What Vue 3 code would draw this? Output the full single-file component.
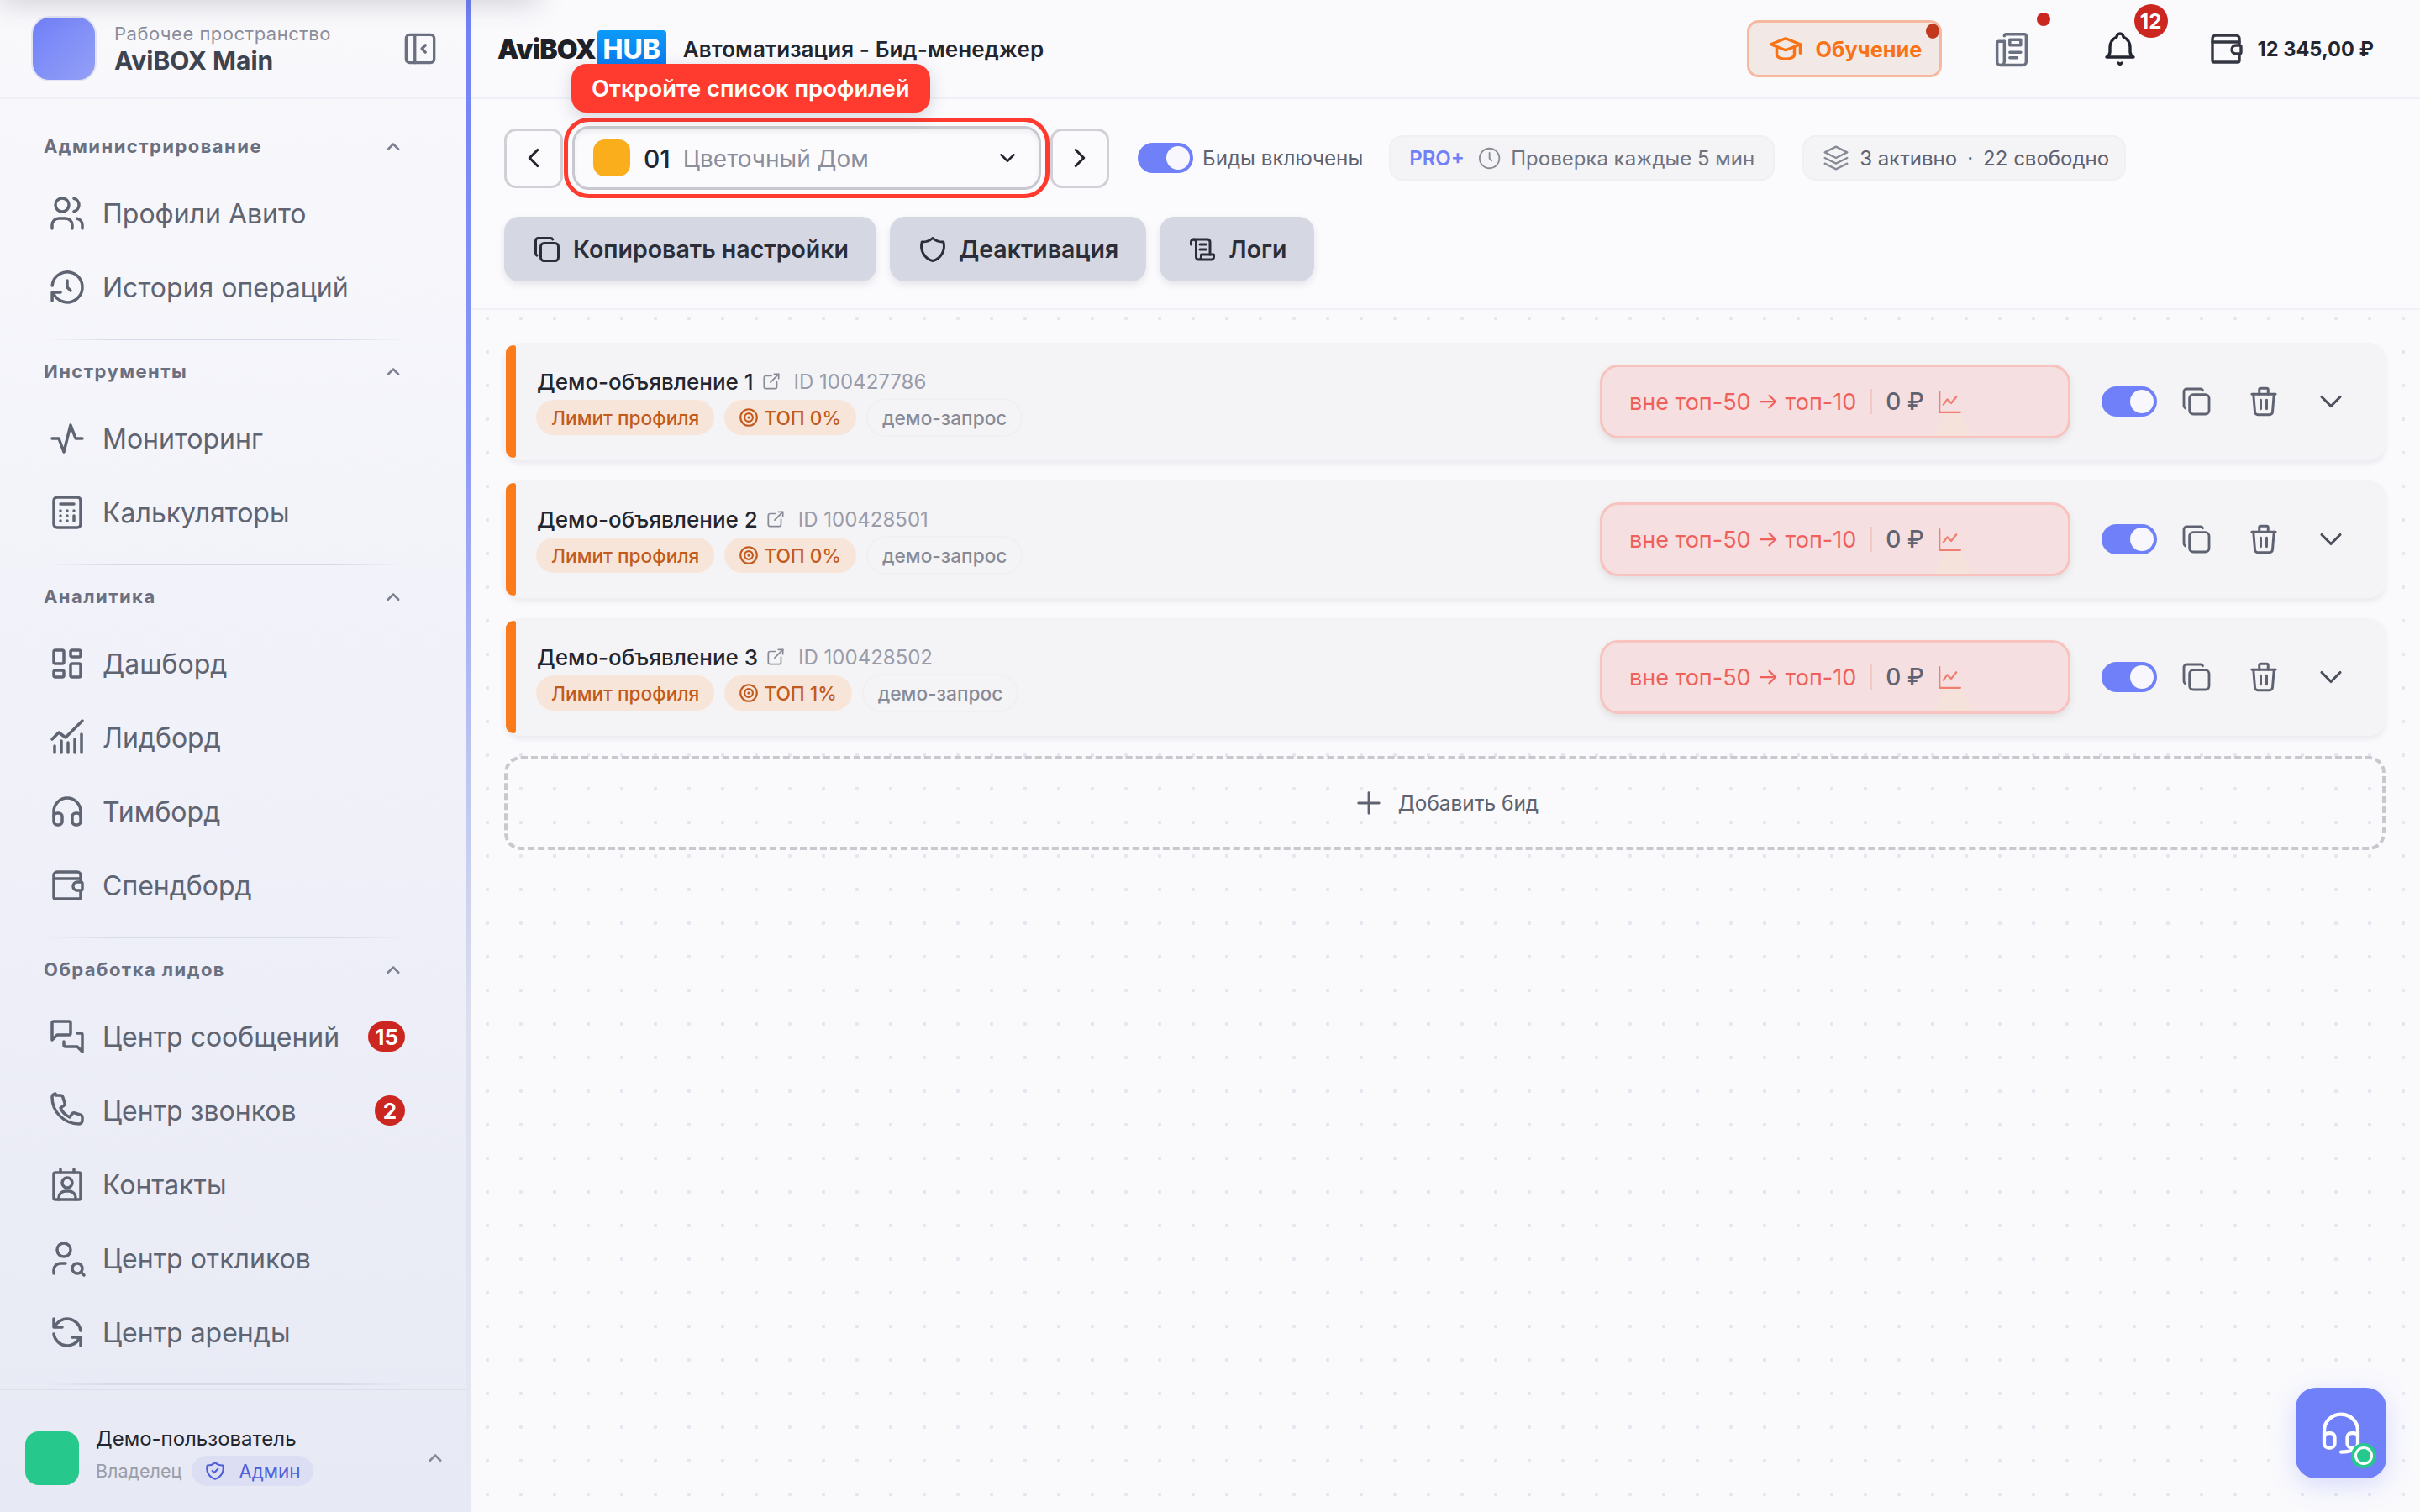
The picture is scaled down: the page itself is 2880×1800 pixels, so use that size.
<template>
  <div class="app">
    <aside class="sidebar">
      <div class="side-head">
        <div class="ws-logo"></div>
        <div class="ws-text">
          <div class="ws-label">Рабочее пространство</div>
          <div class="ws-name">AviBOX Main</div>
        </div>
        <Icon name="collapse" :size="50" :stroke="1.6" class="ws-collapse" />
      </div>

      <nav class="nav">
        <section v-for="sec in sections" :key="sec.title" class="nav-sec">
          <div class="nav-title">
            <span>{{ sec.title }}</span>
            <Icon name="chevUp" :size="30" />
          </div>
          <a v-for="item in sec.items" :key="item.label" class="nav-item">
            <Icon :name="item.icon" :size="48" :stroke="1.75" />
            <span class="nav-label">{{ item.label }}</span>
            <b v-if="item.badge" class="nav-badge">{{ item.badge }}</b>
          </a>
          <div class="nav-div"></div>
        </section>
      </nav>

      <div class="side-foot">
        <div class="avatar"></div>
        <div class="user">
          <div class="user-name">Демо-пользователь</div>
          <div class="user-role">
            <span>Владелец</span>
            <span class="role-pill"><Icon name="shieldCheck" :size="26" />Админ</span>
          </div>
        </div>
        <Icon name="chevUp" :size="30" class="foot-chev" />
      </div>
    </aside>

    <main class="main">
      <div class="top-shade"></div>
      <header class="header">
        <div class="brand">AviBOX<span class="hub">HUB</span></div>
        <div class="page-title">Автоматизация - Бид-менеджер</div>
        <button class="learn">
          <Icon name="school" :size="42" />
          <span>Обучение</span>
          <i class="learn-dot"></i>
        </button>
        <span class="head-ic news">
          <Icon name="news" :size="52" :stroke="1.6" />
          <i class="news-dot"></i>
        </span>
        <span class="head-ic bell">
          <Icon name="bell" :size="48" :stroke="1.7" />
          <b class="bell-badge">12</b>
        </span>
        <span class="head-ic wallet"><Icon name="wallet" :size="48" :stroke="1.7" /></span>
        <span class="balance">12 345,00 ₽</span>
      </header>

      <div class="toolbar">
        <div class="tool-row">
          <button class="arrow"><Icon name="chevLeft" :size="38" /></button>
          <div class="select-wrap">
            <div class="tip">Откройте список профилей</div>
            <div class="select">
              <span class="swatch"></span>
              <span class="sel-num">01</span>
              <span class="sel-name">Цветочный Дом</span>
              <Icon name="chevDown" :size="30" class="sel-chev" />
            </div>
          </div>
          <button class="arrow"><Icon name="chevRight" :size="38" /></button>
          <span class="toggle bids-toggle"><i></i></span>
          <span class="bids-label">Биды включены</span>
          <div class="info-pill pro-pill">
            <b>PRO+</b>
            <Icon name="clock" :size="35" :stroke="1.4" />
            <span>Проверка каждые 5 мин</span>
          </div>
          <div class="info-pill slots-pill">
            <Icon name="stack" :size="40" :stroke="1.4" />
            <span>3 активно</span><span class="sep">·</span><span>22 свободно</span>
          </div>
        </div>
        <div class="tool-row actions">
          <button class="act"><Icon name="copy" :size="36" />Копировать настройки</button>
          <button class="act"><Icon name="shield" :size="36" />Деактивация</button>
          <button class="act"><Icon name="script" :size="36" />Логи</button>
        </div>
      </div>

      <div class="content">
        <article v-for="bid in bids" :key="bid.id" class="card">
          <span class="card-bar"></span>
          <div class="card-info">
            <div class="card-title">
              <span class="card-name">{{ bid.name }}</span>
              <Icon name="external" :size="26" :stroke="1.6" class="card-ext" />
              <span class="card-id">ID {{ bid.id }}</span>
            </div>
            <div class="card-tags">
              <span class="tag warm">Лимит профиля</span>
              <span class="tag warm top-tag"><Icon name="target" :size="26" />{{ bid.top }}</span>
              <span class="tag plain">демо-запрос</span>
            </div>
          </div>
          <div class="pos-box">
            <span class="pos-text">вне топ-50 → топ-10</span>
            <span class="pos-sep"></span>
            <span class="pos-price">0 ₽</span>
            <Icon name="chart" :size="37" :stroke="1.5" class="pos-chart" />
            <i class="pos-beam"></i>
          </div>
          <span class="toggle card-toggle"><i></i></span>
          <Icon name="copy" :size="40" :stroke="1.7" class="card-copy" />
          <Icon name="trash" :size="42" :stroke="1.7" class="card-trash" />
          <Icon name="chevDown" :size="44" :stroke="1.7" class="card-chev" />
        </article>
        <button class="add-bid"><Icon name="plus" :size="42" :stroke="1.6" />Добавить бид</button>
      </div>

      <button class="fab">
        <Icon name="headset" :size="60" :stroke="1.7" />
        <i class="fab-dot"></i>
      </button>
    </main>
  </div>
</template>

<script setup>
import { h } from 'vue'

const paths = {
  users: ['M9 7m-4 0a4 4 0 1 0 8 0a4 4 0 1 0 -8 0', 'M3 21v-2a4 4 0 0 1 4 -4h4a4 4 0 0 1 4 4v2', 'M16 3.13a4 4 0 0 1 0 7.75', 'M21 21v-2a4 4 0 0 0 -3 -3.85'],
  history: ['M12 8v4l2 2', 'M3.05 11a9 9 0 1 1 .5 4m-.5 5v-5h5'],
  activity: ['M3 12h4l3 8l4 -16l3 8h4'],
  calc: ['M4 5a2 2 0 0 1 2 -2h12a2 2 0 0 1 2 2v14a2 2 0 0 1 -2 2h-12a2 2 0 0 1 -2 -2z', 'M8 7h8', 'M8 11h.01M12 11h.01M16 11h.01M8 14h.01M12 14h.01M8 17h.01M12 17h.01M16 14v3'],
  dashboard: ['M5 4h4a1 1 0 0 1 1 1v6a1 1 0 0 1 -1 1h-4a1 1 0 0 1 -1 -1v-6a1 1 0 0 1 1 -1', 'M5 16h4a1 1 0 0 1 1 1v2a1 1 0 0 1 -1 1h-4a1 1 0 0 1 -1 -1v-2a1 1 0 0 1 1 -1', 'M15 12h4a1 1 0 0 1 1 1v6a1 1 0 0 1 -1 1h-4a1 1 0 0 1 -1 -1v-6a1 1 0 0 1 1 -1', 'M15 4h4a1 1 0 0 1 1 1v2a1 1 0 0 1 -1 1h-4a1 1 0 0 1 -1 -1v-2a1 1 0 0 1 1 -1'],
  growth: ['M3 13l4 -4l4 3l10 -10', 'M4.500 21v-4M8.500 21v-7M12.500 21v-6M16.500 21v-8M20.500 21v-11'],
  headphones: ['M4 15a2 2 0 0 1 2 -2h1a2 2 0 0 1 2 2v3a2 2 0 0 1 -2 2h-1a2 2 0 0 1 -2 -2z', 'M15 15a2 2 0 0 1 2 -2h1a2 2 0 0 1 2 2v3a2 2 0 0 1 -2 2h-1a2 2 0 0 1 -2 -2z', 'M4 15v-3a8 8 0 0 1 16 0v3'],
  wallet: ['M20 9v-3a2 2 0 0 0 -2 -2h-12a2 2 0 0 0 -2 2v13a1 1 0 0 0 1 1h14a1 1 0 0 0 1 -1v-3', 'M4 8h16', 'M20 10h-2a2.500 2.500 0 0 0 0 5h2a1 1 0 0 0 1 -1v-3a1 1 0 0 0 -1 -1z'],
  messages: ['M3 14l3 -3h7a1 1 0 0 0 1 -1v-6a1 1 0 0 0 -1 -1h-9a1 1 0 0 0 -1 1z', 'M10 15v2a1 1 0 0 0 1 1h7l3 3v-10a1 1 0 0 0 -1 -1h-2'],
  phone: ['M5 3h3a1.500 1.500 0 0 1 1.400 1l1.100 3.500a1.500 1.500 0 0 1 -.6 1.700l-1.900 1.300a11 11 0 0 0 5.500 5.500l1.300 -1.900a1.500 1.500 0 0 1 1.700 -.6l3.500 1.100a1.500 1.500 0 0 1 1 1.400v2a2 2 0 0 1 -2 2a16 16 0 0 1 -16 -16a2 2 0 0 1 2 -2'],
  contact: ['M4 6a1 1 0 0 1 1 -1h14a1 1 0 0 1 1 1v14a1 1 0 0 1 -1 1h-14a1 1 0 0 1 -1 -1z', 'M8 3v2M16 3v2', 'M9 11a3 3 0 1 0 6 0a3 3 0 1 0 -6 0', 'M7 21v-1a4 4 0 0 1 4 -4h2a4 4 0 0 1 4 4v1'],
  userSearch: ['M6 7a4 4 0 1 0 8 0a4 4 0 0 0 -8 0', 'M4 21v-2a4 4 0 0 1 4 -4h3', 'M15 18a3 3 0 1 0 6 0a3 3 0 1 0 -6 0', 'M20.200 20.200l1.800 1.800'],
  refresh: ['M20 11a8.100 8.100 0 0 0 -15.500 -2m-.5 -5v5h5', 'M4 13a8.100 8.100 0 0 0 15.500 2m.5 5v-5h-5'],
  collapse: ['M4 6a2 2 0 0 1 2 -2h12a2 2 0 0 1 2 2v12a2 2 0 0 1 -2 2h-12a2 2 0 0 1 -2 -2z', 'M9 4v16', 'M15 10l-2 2l2 2'],
  chevUp: ['M7 15l5 -5l5 5'],
  chevDown: ['M6 9l6 6l6 -6'],
  chevLeft: ['M15 6l-6 6l6 6'],
  chevRight: ['M9 6l6 6l-6 6'],
  copy: ['M7 9.667a2.667 2.667 0 0 1 2.667 -2.667h8.666a2.667 2.667 0 0 1 2.667 2.667v8.666a2.667 2.667 0 0 1 -2.667 2.667h-8.666a2.667 2.667 0 0 1 -2.667 -2.667z', 'M4.012 16.737a2 2 0 0 1 -1.012 -1.737v-10c0 -1.100 .9 -2 2 -2h10c.75 0 1.158 .385 1.500 1'],
  shield: ['M12 3a12 12 0 0 0 8.500 3a12 12 0 0 1 -8.500 15a12 12 0 0 1 -8.500 -15a12 12 0 0 0 8.500 -3'],
  shieldCheck: ['M12 3a12 12 0 0 0 8.500 3a12 12 0 0 1 -8.500 15a12 12 0 0 1 -8.500 -15a12 12 0 0 0 8.500 -3', 'M9 12l2 2l4 -4'],
  script: ['M3 8v-2a2 2 0 0 1 4 0v12a2 2 0 0 0 2 2h10a2 2 0 0 0 2 -2v-2h-10v2a2 2 0 0 1 -2 2', 'M5 4h11a2 2 0 0 1 2 2v10', 'M10 8h5M10 12h5'],
  school: ['M22 9l-10 -4l-10 4l10 4l10 -4v6', 'M6 10.600v5.400a6 3 0 0 0 12 0v-5.400'],
  news: ['M8 5a1 1 0 0 1 1 -1h10a1 1 0 0 1 1 1v14a2 2 0 0 1 -2 2h-12a2 2 0 0 1 -2 -2v-10a1 1 0 0 1 1 -1h3', 'M8 8v11a2 2 0 0 1 -2 2', 'M11 7h6v3h-6z', 'M11 14h6M11 17h4'],
  bell: ['M10 5a2 2 0 1 1 4 0a7 7 0 0 1 4 6v3a4 4 0 0 0 2 3h-16a4 4 0 0 0 2 -3v-3a7 7 0 0 1 4 -6', 'M11 20.500l1 .8l1 -.8'],
  clock: ['M3 12a9 9 0 1 0 18 0a9 9 0 0 0 -18 0', 'M12 7v5l2 2'],
  stack: ['M12 4l-8 4l8 4l8 -4z', 'M4 12l8 4l8 -4', 'M4 16l8 4l8 -4'],
  external: ['M12 6h-6a2 2 0 0 0 -2 2v10a2 2 0 0 0 2 2h10a2 2 0 0 0 2 -2v-6', 'M11 13l9 -9', 'M15 4h5v5'],
  target: ['M3 12a9 9 0 1 0 18 0a9 9 0 1 0 -18 0', 'M7.500 12a4.500 4.500 0 1 0 9 0a4.500 4.500 0 1 0 -9 0', 'M11.500 12a.5 .5 0 1 0 1 0a.5 .5 0 1 0 -1 0'],
  chart: ['M4 4v16h16', 'M7 14l3 -4l3 3l4 -5'],
  trash: ['M4 7h16', 'M10 11v6M14 11v6', 'M5 7l1 12a2 2 0 0 0 2 2h8a2 2 0 0 0 2 -2l1 -12', 'M9 7v-3a1 1 0 0 1 1 -1h4a1 1 0 0 1 1 1v3'],
  plus: ['M12 5v14M5 12h14'],
  headset: ['M4 14v-3a8 8 0 1 1 16 0v3', 'M18 19c0 1.657 -2.686 2 -6 2', 'M4 14a2 2 0 0 1 2 -2h1a2 2 0 0 1 2 2v3a2 2 0 0 1 -2 2h-1a2 2 0 0 1 -2 -2z', 'M15 14a2 2 0 0 1 2 -2h1a2 2 0 0 1 2 2v3a2 2 0 0 1 -2 2h-1a2 2 0 0 1 -2 -2z']
}

// small inline svg helper, all icons are 24x24 line icons
const Icon = (props) =>
  h(
    'svg',
    {
      width: props.size,
      height: props.size,
      viewBox: '0 0 24 24',
      fill: 'none',
      stroke: 'currentColor',
      'stroke-width': props.stroke || 2,
      'stroke-linecap': 'round',
      'stroke-linejoin': 'round'
    },
    paths[props.name].map((d) => h('path', { d }))
  )
Icon.props = ['name', 'size', 'stroke']

const sections = [
  {
    title: 'Администрирование',
    items: [
      { icon: 'users', label: 'Профили Авито' },
      { icon: 'history', label: 'История операций' }
    ]
  },
  {
    title: 'Инструменты',
    items: [
      { icon: 'activity', label: 'Мониторинг' },
      { icon: 'calc', label: 'Калькуляторы' }
    ]
  },
  {
    title: 'Аналитика',
    items: [
      { icon: 'dashboard', label: 'Дашборд' },
      { icon: 'growth', label: 'Лидборд' },
      { icon: 'headphones', label: 'Тимборд' },
      { icon: 'wallet', label: 'Спендборд' }
    ]
  },
  {
    title: 'Обработка лидов',
    items: [
      { icon: 'messages', label: 'Центр сообщений', badge: '15' },
      { icon: 'phone', label: 'Центр звонков', badge: '2' },
      { icon: 'contact', label: 'Контакты' },
      { icon: 'userSearch', label: 'Центр откликов' },
      { icon: 'refresh', label: 'Центр аренды' }
    ]
  }
]

const bids = [
  { id: '100427786', name: 'Демо-объявление 1', top: 'ТОП 0%' },
  { id: '100428501', name: 'Демо-объявление 2', top: 'ТОП 0%' },
  { id: '100428502', name: 'Демо-объявление 3', top: 'ТОП 1%' }
]
</script>

<style>
html, body { margin: 0; background: #fafafd; }
</style>

<style scoped>
* { box-sizing: border-box; }
button { font-family: inherit; cursor: pointer; }
.app { display: flex; width: 2880px; height: 1800px; overflow: hidden; position: relative; font-family: Inter, "Noto Sans", sans-serif; color: #23262f; }

/* sidebar */
.sidebar { width: 560px; flex: none; height: 100%; display: flex; flex-direction: column; background: linear-gradient(180deg, #f9f9fc 0%, #f0f1f9 50%, #e7e9f4 100%); border-right: 5px solid; border-image: linear-gradient(180deg, #7080f8 0%, #8c9af6 30%, #bcc4f1 50%, #dde0ee 68%, #e7e9f4 100%) 1; }
.side-head { height: 118px; flex: none; display: flex; align-items: center; padding: 0 30px 0 37px; border-bottom: 2px solid #f0f0f8; }
.ws-logo { width: 78px; height: 78px; border-radius: 22px; background: linear-gradient(135deg, #7080f8, #94a0f6); border: 2px solid #e2e4f4; }
.ws-text { margin-left: 21px; flex: 1; }
.ws-label { font-size: 22px; line-height: 28px; color: #8a8d9c; letter-spacing: .5px; }
.ws-name { font-size: 30px; line-height: 36px; font-weight: 700; color: #3e4350; }
.ws-collapse { color: #6b7080; }
.nav { flex: 1; padding: 38px 0 0; overflow: hidden; }
.nav-title { height: 36px; margin: 0 0 18px 52px; width: 433px; display: flex; align-items: center; justify-content: space-between; font-size: 22px; font-weight: 700; letter-spacing: 1.45px; color: #6b7080; }
.nav-title svg { color: #7c8090; margin-right: 2px; }
.nav-item { height: 88px; display: flex; align-items: center; padding: 0 0 0 56px; color: #5f6472; }
.nav-label { margin-left: 18px; font-size: 32px; flex: 1; }
.nav-badge { min-width: 36px; height: 36px; padding: 0 8px; border-radius: 18px; margin-right: 73px; background: #cc2620; color: #fff; font-size: 26px; font-weight: 700; display: flex; align-items: center; justify-content: center; }
.nav-div { height: 2px; margin: 17px 70px 19px 52px; background: linear-gradient(90deg, transparent, #d6d9e8 20%, #d6d9e8 80%, transparent); }
.side-foot { height: 147px; flex: none; display: flex; align-items: center; padding: 16px 0 0 30px; border-top: 2px solid #dcdee8; position: relative; }
.avatar { width: 64px; height: 64px; border-radius: 16px; background: #26c88c; }
.user { margin-left: 20px; flex: 1; margin-top: -5px; }
.user-name { font-size: 24px; line-height: 32px; color: #22252e; }
.user-role { display: flex; align-items: center; gap: 12px; margin-top: 4px; font-size: 21.5px; color: #9a9daa; }
.role-pill { display: flex; align-items: center; gap: 15px; height: 36px; padding: 0 15px 0 15px; border-radius: 18px; background: #dcdff3; color: #4f5fd8; font-size: 22.4px; }
.foot-chev { color: #85889a; margin-right: 22px; margin-top: -1px; }

/* main column */
.main { flex: 1; min-width: 0; display: flex; flex-direction: column; position: relative; background: #fafafd; }
.top-shade { position: absolute; left: -560px; top: -30px; width: 640px; height: 30px; box-shadow: 0 0 34px rgba(60, 60, 80, .28); z-index: 5; }
.header { height: 118px; flex: none; display: flex; align-items: center; padding: 0 55px 0 32px; border-bottom: 2px solid #f0f0f8; }
.brand { display: flex; align-items: center; font-size: 32px; font-weight: 900; letter-spacing: -.9px; color: #1f2128; }
.hub { margin-left: 2px; width: 82px; height: 44px; border-radius: 4px; background: linear-gradient(180deg, #0b9bf8, #0a78ef); color: #fff; font-weight: 800; letter-spacing: 0; display: flex; align-items: center; justify-content: center; }
.page-title { margin-left: 20px; font-size: 26px; font-weight: 600; letter-spacing: .1px; color: #23262f; flex: 1; }
.learn { position: relative; width: 232px; height: 68px; display: flex; align-items: center; gap: 15px; padding: 0 0 0 22px; border: 3px solid #f6b9a0; border-radius: 14px; background: #f2e9e6; color: #f97316; font-size: 25.3px; font-weight: 700; }
.learn-dot { position: absolute; right: 0; top: 1px; width: 16px; height: 18px; border-radius: 50%; background: #c0391f; }
.head-ic { position: relative; display: flex; color: #23262f; }
.news { margin-left: 57px; color: #6b7080; }
.news-dot { position: absolute; left: 56px; top: -17px; width: 16px; height: 16px; border-radius: 50%; background: #cc2620; }
.bell { margin-left: 79px; }
.bell-badge { position: absolute; left: 41px; top: -29px; width: 40px; height: 40px; border-radius: 50%; background: #cc2620; color: #fff; font-size: 24px; display: flex; align-items: center; justify-content: center; }
.wallet { margin-left: 78px; color: #343741; }
.balance { margin-left: 14px; font-size: 23.6px; font-weight: 700; color: #23262f; white-space: nowrap; }

.toolbar { height: 251px; flex: none; padding: 32px 0 0 40px; border-bottom: 2px solid #f0f0f6; background: #fbfbfe; }
.tool-row { display: flex; align-items: center; height: 76px; }
.arrow { width: 70px; height: 71px; display: flex; align-items: center; justify-content: center; border: 3px solid #d0d0d6; border-radius: 14px; background: #fbfbfe; color: #23262f; padding: 0; }
.select-wrap { position: relative; margin: 0 11px; z-index: 2; }
.select { width: 558px; height: 76px; display: flex; align-items: center; padding: 0 22px; background: #fbfbfe; border: 3px solid #c8c8d0; border-radius: 20px; outline: 5px solid #ff3b30; outline-offset: 5px; box-shadow: inset 0 4px 6px rgba(0, 0, 0, .05); }
.swatch { width: 44px; height: 44px; border-radius: 14px; background: #fbae1c; }
.sel-num { margin-left: 16px; font-size: 30px; font-weight: 500; color: #23262f; padding-top: 2px; }
.sel-name { margin-left: 15px; font-size: 28px; color: #8c8f9b; flex: 1; padding-top: 2px; }
.sel-chev { color: #23262f; }
.tip { position: absolute; left: -1px; top: -74px; z-index: 3; height: 58px; padding: 0 24px; display: flex; align-items: center; border-radius: 18px; background: #ff3b30; color: #fff; font-size: 27.4px; font-weight: 600; white-space: nowrap; box-shadow: 0 6px 20px rgba(60, 60, 80, .2); }
.toggle { display: block; width: 66px; height: 36px; border-radius: 18px; background: #7080f8; position: relative; flex: none; }
.toggle i { position: absolute; right: 4px; top: 4px; width: 28px; height: 28px; border-radius: 50%; background: #f7f7fd; }
.bids-toggle { margin-left: 34px; }
.bids-label { margin-left: 11px; font-size: 24.2px; color: #5f6270; white-space: nowrap; }
.info-pill { height: 54px; display: flex; align-items: center; border: 2px solid #f0f0f4; border-radius: 16px; background: #f4f4f7; font-size: 24px; color: #70737f; white-space: nowrap; flex: none; }
.pro-pill { margin-left: 31px; padding: 0 22px; width: 459px; }
.pro-pill b { color: #7080f8; font-weight: 600; }
.pro-pill svg { margin: 0 10px 0 14px; color: #888b96; }
.slots-pill { margin-left: 33px; padding: 0 18px; width: 385px; color: #5f6270; }
.slots-pill svg { margin-right: 8px; color: #888b96; }
.sep { margin: 0 12px; }
.actions { height: 77px; margin-top: 32px; gap: 16px; }
.act { height: 77px; display: flex; align-items: center; gap: 13px; padding: 0 33px; border: none; border-radius: 18px; background: #d5d8e2; color: #2b2e38; font-size: 28.5px; font-weight: 600; box-shadow: 0 4px 8px rgba(40, 40, 60, .1); }

/* bids */
.content { flex: 1; padding: 39px 41px 0 40px; display: flex; flex-direction: column; gap: 24px; background-image: radial-gradient(circle, #e5e6ef 2px, transparent 2.5px); background-size: 40px 40px; background-position: 0 -10px; }
.card { height: 140px; flex: none; display: flex; align-items: center; position: relative; padding-left: 39px; background: #f4f4f7; border-radius: 20px; box-shadow: 0 4px 6px rgba(30, 30, 50, .07); }
.card-bar { position: absolute; left: 2px; top: 3px; bottom: 3px; width: 12px; border-radius: 12px 4px 4px 12px; background: #fb7a1c; }
.card-info { flex: 1; min-width: 0; }
.card-title { display: flex; align-items: center; height: 36px; }
.card-name { font-size: 26px; font-weight: 500; color: #23262f; }
.card-ext { margin-left: 8px; color: #888b96; }
.card-id { margin-left: 14px; font-size: 24px; color: #9a9caa; }
.card-tags { display: flex; align-items: center; gap: 12px; margin-top: 2px; margin-left: -1px; }
.tag { height: 42px; display: flex; align-items: center; gap: 8px; padding: 0 18px; border-radius: 21px; font-size: 22.7px; font-weight: 500; }
.top-tag { padding-left: 16px; gap: 5px; }
.warm { background: #f8e5da; color: #c25a1c; }
.plain { height: 46px; border: 2px solid #f0f0f3; border-radius: 23px; color: #888b96; padding: 0 17px; }
.pos-box { width: 560px; height: 88px; flex: none; position: relative; display: flex; align-items: center; padding: 0 0 0 32px; background: #f5dfe0; border: 3px solid #f8c2be; border-radius: 22px; box-shadow: 0 4px 8px rgba(60, 30, 30, .1); }
.pos-text { font-size: 27px; color: #f0605a; white-space: nowrap; }
.pos-sep { width: 2px; height: 30px; margin: 0 16px 0 17px; background: #f2c8c6; }
.pos-price { font-size: 28px; font-weight: 500; color: #5f6270; }
.pos-chart { margin-left: 12px; color: #ef7f6e; }
.pos-beam { position: absolute; left: 394px; bottom: 0; width: 46px; height: 27px; background: #f5e2da; clip-path: polygon(30% 0, 70% 0, 100% 100%, 0 100%); }
.card-toggle { margin-left: 37px; }
.card-copy { margin-left: 27px; color: #5f6270; }
.card-trash { margin-left: 39px; color: #5f6270; }
.card-chev { margin: 0 43px 0 37px; color: #4c505c; }
.add-bid { height: 112px; flex: none; display: flex; align-items: center; justify-content: center; gap: 14px; border: 4px dashed #c8c8ce; border-radius: 20px; background: transparent; color: #5f6270; font-size: 24.4px; }

.fab { position: absolute; right: 40px; top: 1652px; width: 108px; height: 108px; display: flex; align-items: center; justify-content: center; padding: 0; border: none; border-radius: 24px; background: #7080f8; color: #fff; box-shadow: 0 8px 30px rgba(112, 128, 248, .25); }
.fab-dot { position: absolute; left: 70px; top: 70px; width: 22px; height: 22px; border-radius: 50%; background: #26c88c; border: 3px solid #fff; box-shadow: 0 0 0 4px #26c88c; }
</style>
